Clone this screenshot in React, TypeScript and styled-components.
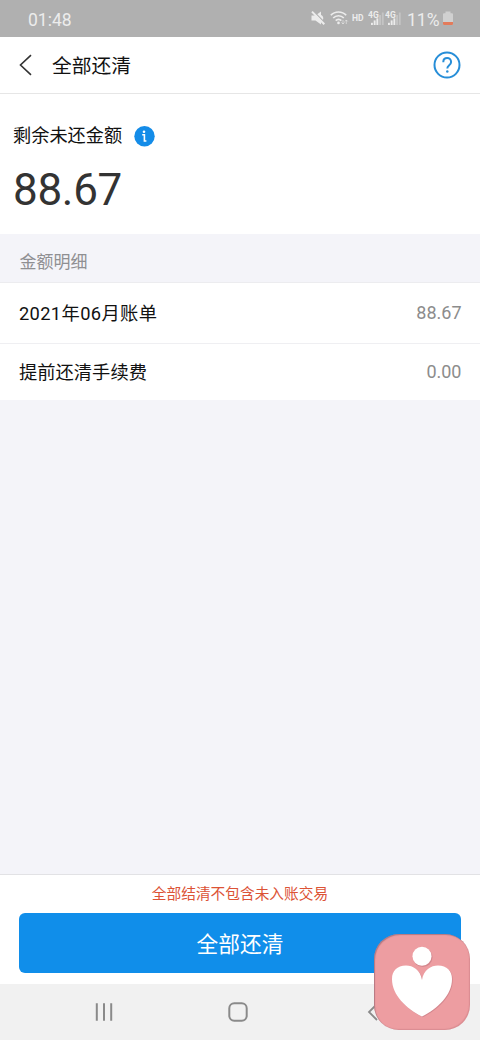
import React from 'react';
import styled, { createGlobalStyle } from 'styled-components';

const GlobalStyle = createGlobalStyle`
  * { box-sizing: border-box; }
  body {
    margin: 0;
    background: #f4f4f9;
    font-family: Roboto, "Noto Sans CJK SC", sans-serif;
    color: #111;
  }
`;

const Screen = styled.div`
  position: relative;
  display: flex;
  flex-direction: column;
  width: 480px;
  height: 1040px;
  overflow: hidden;
  background: #f4f4f9;
`;

const StatusBar = styled.div`
  display: flex;
  align-items: center;
  justify-content: space-between;
  flex: none;
  height: 37px;
  padding: 2px 27px 0 28px;
  background: #b0b0b0;
  color: #ececec;
  font-size: 17.5px;
  line-height: 20px;
`;

const StatusIcons = styled.div`
  display: flex;
  align-items: center;
  height: 20px;
`;

const BatteryText = styled.span`
  margin-right: 3.5px;
`;

const Header = styled.header`
  display: flex;
  align-items: center;
  flex: none;
  height: 57px;
  padding: 0 19px;
  background: #fff;
  border-bottom: 1px solid #e6e6e6;
`;

const Title = styled.h1`
  flex: 1;
  margin: 0 0 0 19px;
  padding-top: 3px;
  font-size: 19.8px;
  font-weight: 400;
  line-height: 28px;
`;

const Summary = styled.section`
  flex: none;
  height: 140px;
  padding: 28px 13px 0;
  background: #fff;
`;

const SummaryLabel = styled.div`
  display: flex;
  align-items: center;
  gap: 12px;
  height: 28px;
  font-size: 18.2px;
  line-height: 28px;
`;

const Amount = styled.div`
  margin-top: 12px;
  color: #333;
  font-size: 44px;
  line-height: 56px;
  letter-spacing: -0.3px;
`;

const SectionTitle = styled.div`
  display: flex;
  align-items: center;
  flex: none;
  height: 49px;
  padding: 4px 19.5px 0;
  border-bottom: 1px solid #ececef;
  color: #8f8f92;
  font-size: 17px;
`;

const Row = styled.div<{ $height: number; $divider?: boolean }>`
  display: flex;
  align-items: center;
  justify-content: space-between;
  flex: none;
  height: ${({ $height }) => $height}px;
  padding: 0 18.5px 2px 19px;
  background: #fff;
  border-bottom: ${({ $divider }) => ($divider ? '1px solid #efeff2' : 'none')};
  font-size: 18.3px;
`;

const RowLabel = styled.span<{ $spacing?: number }>`
  letter-spacing: ${({ $spacing = 0 }) => $spacing}px;
`;

const RowValue = styled.span`
  color: #8c8c8c;
  font-size: 18px;
`;

const Footer = styled.footer`
  flex: none;
  height: 110px;
  margin-top: auto;
  padding: 8px 19px 0;
  border-top: 1px solid #e2e2e5;
  background: #fff;
`;

const Notice = styled.p`
  margin: 0 0 8px;
  color: #dc5336;
  font-size: 14.7px;
  line-height: 22px;
  text-align: center;
`;

const PayButton = styled.button`
  display: block;
  width: 100%;
  height: 60px;
  padding: 0 0 2px;
  border: 0;
  border-radius: 6px;
  background: #108eea;
  color: #fff;
  font-family: inherit;
  font-size: 21.7px;
`;

const NavBar = styled.nav`
  display: flex;
  flex: none;
  align-items: center;
  justify-content: space-between;
  height: 56px;
  padding: 0 95px 1px;
  background: #f1f1f1;
`;

const HomeSlot = styled.div`
  margin-right: 4px;
`;

const FloatingBadge = styled.div`
  position: absolute;
  right: 10px;
  bottom: 10px;
  width: 96px;
  height: 96px;
  border-radius: 25px;
  background: #ed9da1;
  box-shadow: inset 1px 1px 1px rgba(110, 75, 90, 0.45), inset -1px -1px 1px rgba(145, 75, 85, 0.2);
`;

const Icon = styled.svg`
  display: block;
  flex: none;
`;

function SignalIcon({ level }: { level: number }) {
  return (
    <Icon width="17.5" height="20" viewBox="0 0 17.5 20" fill="#ececec">
      <text x="0" y="7.5" fontSize="8.5" fontWeight="700" fontFamily="Roboto, sans-serif">4G</text>
      {[0, 1, 2, 3, 4].map((i) => (
        <rect
          key={i}
          x={3 + i * 2.7}
          y={[12.8, 10.4, 8.3, 5, 2.5][i]}
          width="1.9"
          height={[2.2, 4.6, 6.7, 10, 12.5][i]}
          opacity={i < level ? 1 : 0.35}
        />
      ))}
    </Icon>
  );
}

export default function App() {
  return (
    <>
      <GlobalStyle />
      <Screen>
        <StatusBar>
          <span>01:48</span>
          <StatusIcons>
            <Icon width="18.5" height="20" viewBox="0 0 18.5 20">
              <path d="M.5 5.500h4L10 1.500v13l-5.500-4h-4z" fill="#ececec" />
              <path d="M10 5c3 1.200 3 5.300 0 6.500z" fill="#ececec" />
              <path d="M2.200 1 14 13" stroke="#b0b0b0" strokeWidth="1.300" />
              <path d="M1 1.600 13.300 14.300" stroke="#ececec" strokeWidth="2" />
            </Icon>
            <Icon width="22.5" height="20" viewBox="0 0 22.5 20" fill="none" stroke="#ececec" strokeWidth="1.700">
              <path d="M.8 5.300c4-4.400 11.400-4.400 15.400 0M3.200 8c2.800-3 7.800-3 10.600 0M5.700 10.600c1.600-1.700 4-1.700 5.600 0" />
              <circle cx="8.500" cy="12.900" r="1.300" fill="#ececec" stroke="none" />
              <path d="M13 10v4m-1.500-1.500L13 14l1.500-1.500M16.300 14v-4m-1.500 1.500 1.500-1.500 1.500 1.500" strokeWidth=".9" opacity=".65" />
            </Icon>
            <Icon width="15.5" height="20" viewBox="0 0 15.5 20" fill="#ececec">
              <text x="0" y="11" fontSize="8.500" fontWeight="700" fontFamily="Roboto, sans-serif">HD</text>
            </Icon>
            <SignalIcon level={3} />
            <SignalIcon level={3} />
            <Icon width="4.5" height="20" />
            <BatteryText>11%</BatteryText>
            <Icon width="10" height="20" viewBox="0 0 10 20">
              <path d="M2.500 1.500h5v1.700H9a1 1 0 0 1 1 1v9.800a1 1 0 0 1-1 1H1a1 1 0 0 1-1-1V4.200a1 1 0 0 1 1-1h1.500z" fill="#d0d0d0" />
              <path d="M0 12h10v2a1 1 0 0 1-1 1H1a1 1 0 0 1-1-1z" fill="#e37b5b" />
            </Icon>
          </StatusIcons>
        </StatusBar>

        <Header>
          <Icon width="14" height="22" viewBox="0 0 14 22" fill="none" stroke="#333" strokeWidth="1.600">
            <path d="M12 1.200 1.500 11 12 20.800" />
          </Icon>
          <Title>全部还清</Title>
          <Icon width="28" height="28" viewBox="0 0 28 28" fill="none" stroke="#278ed8">
            <circle cx="14" cy="14" r="12.500" strokeWidth="2" />
            <path d="M10.300 11.300V11c0-5.300 7.800-5.300 7.800 0 0 3.300-3.800 3.200-3.800 6.500" strokeWidth="2" />
            <circle cx="14.300" cy="20.400" r="1.250" fill="#278ed8" stroke="none" />
          </Icon>
        </Header>

        <Summary>
          <SummaryLabel>
            <span>剩余未还金额</span>
            <Icon width="21" height="21" viewBox="0 0 21 21">
              <circle cx="10.500" cy="10.200" r="10.200" fill="#148ce8" />
              <circle cx="10" cy="5.700" r="1.300" fill="#fff" />
              <path d="M8.200 8.700h2.200v6.300h2" fill="none" stroke="#fff" strokeWidth="1.600" />
            </Icon>
          </SummaryLabel>
          <Amount>88.67</Amount>
        </Summary>

        <SectionTitle>金额明细</SectionTitle>
        <Row $height={61} $divider>
          <RowLabel $spacing={0.35}>2021年06月账单</RowLabel>
          <RowValue>88.67</RowValue>
        </Row>
        <Row $height={56}>
          <RowLabel>提前还清手续费</RowLabel>
          <RowValue>0.00</RowValue>
        </Row>

        <Footer>
          <Notice>全部结清不包含未入账交易</Notice>
          <PayButton>全部还清</PayButton>
        </Footer>

        <NavBar>
          <Icon width="18" height="20" viewBox="0 0 18 20" stroke="#8a8a8a" strokeWidth="2">
            <path d="M1.800 1.300v17.400M9 1.300v17.400M16.200 1.300v17.400" />
          </Icon>
          <HomeSlot>
            <Icon width="20" height="20" viewBox="0 0 20 20" fill="none" stroke="#8a8a8a" strokeWidth="2">
              <rect x="1.300" y="1.300" width="17.400" height="17.400" rx="5" />
            </Icon>
          </HomeSlot>
          <Icon width="18" height="20" viewBox="0 0 18 20" fill="none" stroke="#8a8a8a" strokeWidth="1.800">
            <path d="M10 2 2 10l8 8" />
          </Icon>
        </NavBar>

        <FloatingBadge>
          <Icon width="96" height="96" viewBox="0 0 96 96">
            <g fill="#a85f6b" opacity=".35" transform="translate(.8 .8)">
              <circle cx="48" cy="22.500" r="9.700" />
              <path d="M48 46C46.500 36 39 31.500 32 31.500 23 31.500 18 37 18 45c0 16 14 29.500 30 37.500C64 74.500 78 61 78 45c0-8-5-13.500-14-13.500C57 31.500 49.500 36 48 46z" />
            </g>
            <g fill="#fff">
              <circle cx="48" cy="22.200" r="9.500" />
              <path d="M48 46C46.500 36 39 31.500 32 31.500 23 31.500 18 37 18 45c0 16 14 29.500 30 37.500C64 74.500 78 61 78 45c0-8-5-13.500-14-13.500C57 31.500 49.500 36 48 46z" />
            </g>
          </Icon>
        </FloatingBadge>
      </Screen>
    </>
  );
}
